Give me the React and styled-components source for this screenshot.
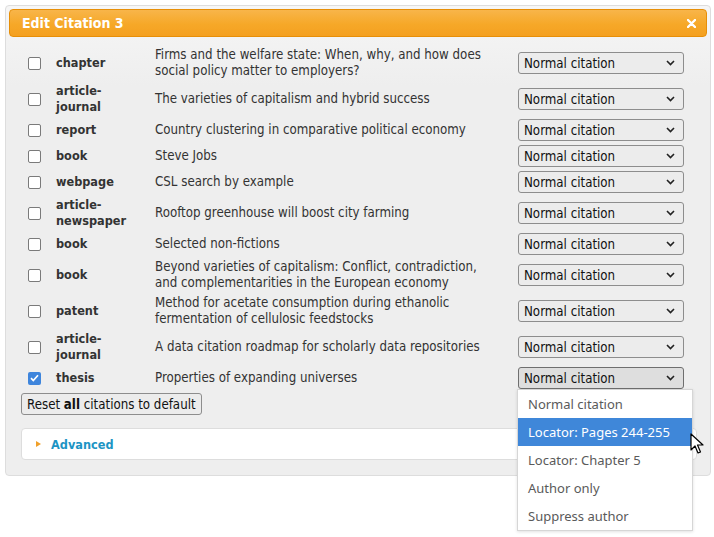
import React from "react";
import styled, { createGlobalStyle } from "styled-components";

const GlobalStyle = createGlobalStyle`
  html, body {
    margin: 0;
    padding: 0;
    background: #fff;
  }
  body {
    font-family: "DejaVu Sans Condensed", "DejaVu Sans", sans-serif;
    font-size: 13.2px;
    color: #333;
  }
`;

const citations = [
  { type: "chapter", title: "Firms and the welfare state: When, why, and how does social policy matter to employers?" },
  { type: "article-journal", title: "The varieties of capitalism and hybrid success" },
  { type: "report", title: "Country clustering in comparative political economy" },
  { type: "book", title: "Steve Jobs" },
  { type: "webpage", title: "CSL search by example" },
  { type: "article-newspaper", title: "Rooftop greenhouse will boost city farming" },
  { type: "book", title: "Selected non-fictions" },
  { type: "book", title: "Beyond varieties of capitalism: Conflict, contradiction, and complementarities in the European economy" },
  { type: "patent", title: "Method for acetate consumption during ethanolic fermentation of cellulosic feedstocks" },
  { type: "article-journal", title: "A data citation roadmap for scholarly data repositories" },
  { type: "thesis", title: "Properties of expanding universes", checked: true, open: true },
];

const options = [
  "Normal citation",
  "Locator: Pages 244-255",
  "Locator: Chapter 5",
  "Author only",
  "Suppress author",
];

const Page = styled.div`
  position: relative;
  height: 537px;
  padding: 5px;
  box-sizing: border-box;
`;

const Dialog = styled.div`
  width: 706px;
  box-sizing: border-box;
  border: 1px solid #dddddd;
  border-radius: 4px;
  padding: 3px;
  background: linear-gradient(#f6f6f6, #eeeeee 80px);
`;

const TitleBar = styled.div`
  height: 28px;
  box-sizing: border-box;
  display: flex;
  align-items: center;
  justify-content: space-between;
  padding: 0 10px 0 12px;
  border: 1px solid #e78f08;
  border-radius: 4px;
  background: linear-gradient(#f8b54a, #f6a828 55%, #f4a020);
  color: #fff;
  font-weight: bold;
  font-size: 14px;
`;

const Content = styled.div`
  padding: 8px 10px 12px 12px;
`;

const Table = styled.div`
  display: flex;
  flex-direction: column;
`;

const Row = styled.div`
  display: grid;
  grid-template-columns: 35px 99px 363px 166px;
  align-items: center;
  padding: 2px 0;
  min-height: 22px;
`;

const Check = styled.span`
  width: 13px;
  height: 13px;
  margin-left: 7px;
  box-sizing: border-box;
  border-radius: 2px;
  border: ${(p) => (p.$checked ? "none" : "1.5px solid #7a7a7a")};
  background: ${(p) => (p.$checked ? "#3e85dc" : "#fff")};
  display: flex;
  align-items: center;
  justify-content: center;
`;

const TypeCell = styled.div`
  font-weight: bold;
  font-size: 12.6px;
  line-height: 16px;
  width: 78px;
  color: #333;
`;

const TitleCell = styled.div`
  line-height: 16px;
  width: 338px;
  color: #333;
`;

const SelectBox = styled.div`
  height: 22px;
  box-sizing: border-box;
  border: 1px solid ${(p) => (p.$open ? "#6f6f6f" : "#8d8d8d")};
  border-radius: 3px;
  background: ${(p) => (p.$open ? "#dedede" : "#ececec")};
  display: flex;
  align-items: center;
  justify-content: space-between;
  padding: 0 8px 0 5px;
  color: #111;
`;

const ResetButton = styled.button`
  margin-top: 2px;
  height: 22px;
  padding: 0 5px;
  border: 1px solid #8d8d8d;
  border-radius: 3px;
  background: #ececec;
  font-family: inherit;
  font-size: 13.2px;
  color: #111;
  b {
    font-weight: bold;
  }
`;

const Advanced = styled.div`
  margin-top: 13px;
  width: 676px;
  height: 32px;
  box-sizing: border-box;
  background: #fff;
  border: 1px solid #dddddd;
  border-radius: 4px;
  display: flex;
  align-items: center;
  gap: 10px;
  padding-left: 14px;
  color: #1c94c4;
  font-weight: bold;
  font-size: 12.6px;
`;

const Triangle = styled.span`
  width: 0;
  height: 0;
  border-top: 3.5px solid transparent;
  border-bottom: 3.5px solid transparent;
  border-left: 5px solid #f0a02a;
`;

const Popup = styled.div`
  position: absolute;
  left: 517px;
  top: 389px;
  width: 176px;
  box-sizing: border-box;
  background: #fff;
  border: 1px solid #d6d6d6;
  box-shadow: 0 1px 3px rgba(0, 0, 0, 0.12);
  font-family: "Noto Sans", sans-serif;
  font-size: 13px;
`;

const Option = styled.div`
  height: 28px;
  display: flex;
  align-items: center;
  padding-left: 10px;
  color: ${(p) => (p.$active ? "#fff" : "#5a5a5a")};
  background: ${(p) => (p.$active ? "#3f87d9" : "transparent")};
`;

const Cursor = styled.svg`
  position: absolute;
  left: 690px;
  top: 433px;
`;

const Chevron = () => (
  <svg width="9" height="6" viewBox="0 0 9 6">
    <path d="M1 1l3.5 3.5L8 1" fill="none" stroke="#222" strokeWidth="1.6" />
  </svg>
);

const CloseIcon = () => (
  <svg width="9" height="9" viewBox="0 0 9 9">
    <path d="M1 1l7 7M8 1L1 8" stroke="#fff" strokeWidth="2.4" strokeLinecap="round" />
  </svg>
);

export default function App() {
  return (
    <Page>
      <GlobalStyle />
      <Dialog>
        <TitleBar>
          <span>Edit Citation 3</span>
          <CloseIcon />
        </TitleBar>
        <Content>
          <Table>
            {citations.map((c, i) => (
              <Row key={i}>
                <Check $checked={c.checked}>
                  {c.checked && (
                    <svg width="9" height="8" viewBox="0 0 9 8">
                      <path d="M1 4.2l2.3 2.3L8 1.3" fill="none" stroke="#fff" strokeWidth="1.7" />
                    </svg>
                  )}
                </Check>
                <TypeCell>{c.type}</TypeCell>
                <TitleCell>{c.title}</TitleCell>
                <SelectBox $open={c.open}>
                  <span>Normal citation</span>
                  <Chevron />
                </SelectBox>
              </Row>
            ))}
          </Table>
          <ResetButton>
            Reset <b>all</b> citations to default
          </ResetButton>
          <Advanced>
            <Triangle />
            <span>Advanced</span>
          </Advanced>
        </Content>
      </Dialog>
      <Popup>
        {options.map((o, i) => (
          <Option key={o} $active={i === 1}>
            {o}
          </Option>
        ))}
      </Popup>
      <Cursor width="14" height="21" viewBox="0 0 14 21">
        <path d="M1 1v16l4-4 3 7 2.5-1-3-7h5.5z" fill="#fff" stroke="#000" strokeWidth="1.2" strokeLinejoin="round" />
      </Cursor>
    </Page>
  );
}
